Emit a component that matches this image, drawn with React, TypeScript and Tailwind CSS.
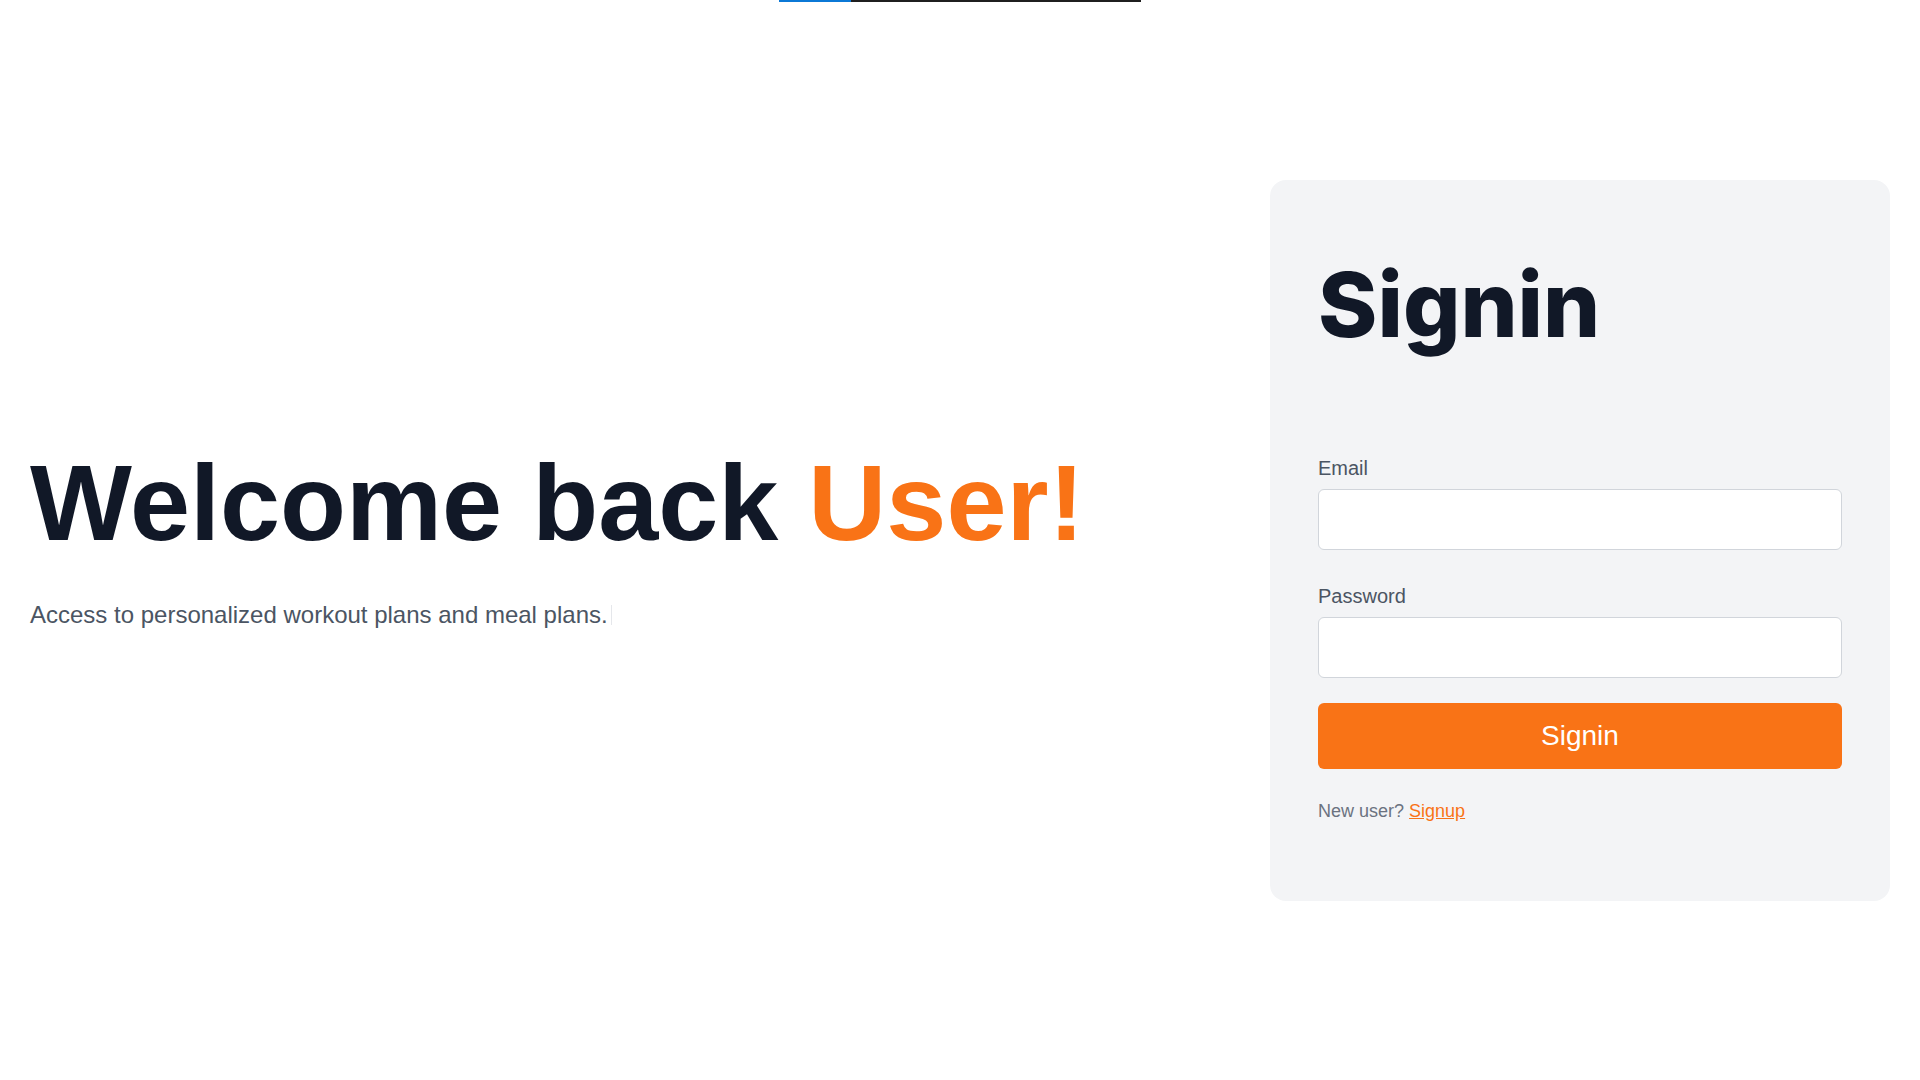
import React, { useState } from 'react';

const App: React.FC = () => {
  const [email, setEmail] = useState('');
  const [password, setPassword] = useState('');

  return (
    <div className="relative h-screen w-full bg-white font-['Liberation_Sans',Arial,sans-serif] overflow-hidden">
      {/* Top loading bar */}
      <div className="absolute top-0 left-1/2 -translate-x-1/2 w-[362px] h-[2px] bg-[#1f1f1f]">
        <div className="w-[72px] h-full bg-[#0b78d6]"></div>
      </div>

      <div className="h-full flex items-center justify-between px-[30px]">
        {/* Left hero */}
        <div>
          <h1 className="text-[108px] leading-none font-bold text-[#111827]">
            Welcome back <span className="text-[#f97316]">User!</span>
          </h1>
          <p className="mt-[42px] text-2xl text-[#4b5563] flex items-center">
            Access to personalized workout plans and meal plans.
            <span className="inline-block w-px h-5 bg-[#e5e7eb] ml-[3px]"></span>
          </p>
        </div>

        {/* Signin card */}
        <div className="w-[620px] bg-[#f3f4f6] rounded-2xl px-12 pt-20 pb-[76px]">
          <h2 className="font-['Inter',sans-serif] text-[90px] leading-none font-extrabold text-[#111827]">Signin</h2>

          <form className="mt-[104px]" onSubmit={(e) => e.preventDefault()}>
            <label className="block text-xl text-[#4b5563]">Email</label>
            <input
              type="email"
              value={email}
              onChange={(e) => setEmail(e.target.value)}
              className="mt-[7px] block w-full h-[61px] bg-white border border-[#d1d5db] rounded-md px-4 text-xl outline-none"
            />

            <label className="block mt-8 text-xl text-[#4b5563]">Password</label>
            <input
              type="password"
              value={password}
              onChange={(e) => setPassword(e.target.value)}
              className="mt-[7px] block w-full h-[61px] bg-white border border-[#d1d5db] rounded-md px-4 text-xl outline-none"
            />

            <button
              type="submit"
              className="mt-[25px] w-full h-[66px] bg-[#f97316] text-white text-[28px] rounded-md flex items-center justify-center"
            >
              Signin
            </button>
          </form>

          <p className="mt-7 text-lg text-[#6b7280]">
            New user? <a href="#" className="text-[#f97316] underline">Signup</a>
          </p>
        </div>
      </div>
    </div>
  );
};

export default App;
